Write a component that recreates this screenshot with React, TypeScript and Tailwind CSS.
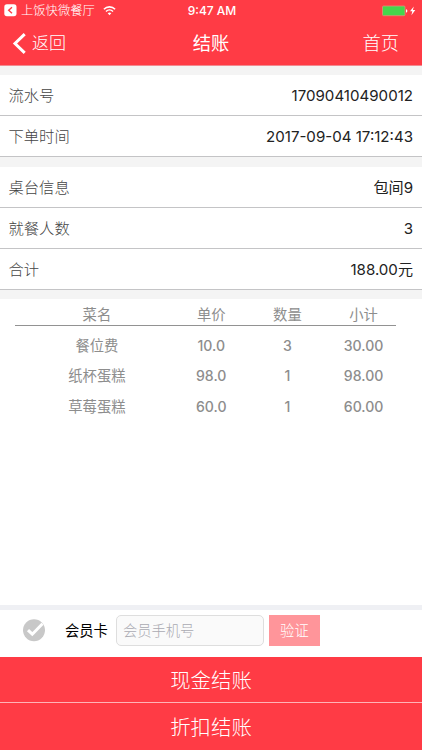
import React, { useState } from 'react';

interface InfoRowProps {
  label: string;
  value: string;
}

interface Dish {
  name: string;
  price: string;
  count: number;
  total: string;
}

const dishes: Dish[] = [
  { name: '餐位费', price: '10.0', count: 3, total: '30.00' },
  { name: '纸杯蛋糕', price: '98.0', count: 1, total: '98.00' },
  { name: '草莓蛋糕', price: '60.0', count: 1, total: '60.00' }
];

function StatusBar() {
  return (
    <div className="grid h-[21px] grid-cols-3 items-center pl-1 pr-[5px] text-[12px]">
      <div className="flex items-center">
        <svg width="13" height="13" viewBox="0 0 13 13">
          <rect x="0.3" y="0.3" width="12.2" height="11.9" rx="2.6" fill="#fff" />
          <path d="M8 3.2 4.7 6.2 8 9.2" fill="none" stroke="#ff3b45" strokeWidth="1.4" />
        </svg>
        <span className="ml-1 whitespace-nowrap pt-[2px] text-[12.3px] font-light">上饭快微餐厅</span>
        <svg className="ml-2 shrink-0" width="13" height="10" viewBox="0 0 13 10">
          <path d="M0.9 3.2a8 8 0 0 1 11.2 0" fill="none" stroke="#fff" strokeWidth="1.6" />
          <path d="M3 5.5a5 5 0 0 1 7 0" fill="none" stroke="#fff" strokeWidth="1.5" />
          <path d="M4.7 7.3a2.6 2.6 0 0 1 3.6 0L6.5 9.2z" fill="#fff" />
        </svg>
      </div>
      <span className="pl-[3px] pt-px text-center font-medium">9:47 AM</span>
      <div className="flex items-center justify-end">
        <svg width="35" height="12" viewBox="0 0 35 12">
          <rect x="0.5" y="1" width="22.5" height="9.7" rx="1" fill="#45d64c" stroke="#dc9278" strokeWidth="0.8" />
          <path d="M24 4.2c1.8 0 1.8 3.4 0 3.4z" fill="#fff" />
          <path d="M31.8 1.4 28 6.3h2.3l-0.9 4L33.3 5h-2.4z" fill="#fff" />
        </svg>
      </div>
    </div>
  );
}

function InfoRow({ label, value }: InfoRowProps) {
  return (
    <div className="flex h-[41px] items-center justify-between border-b border-[#c4c4c6] bg-white pl-[8.5px] pr-[9px] pt-[2px]">
      <span className="text-[15.3px] font-light text-[#444]">{label}</span>
      <span className="text-[15.1px] text-[#222]">{value}</span>
    </div>
  );
}

export default function App() {
  const [phone, setPhone] = useState('');

  return (
    <div className="flex h-[750px] w-[422px] flex-col overflow-hidden bg-white font-['Inter','Noto_Sans_CJK_SC',sans-serif]">
      <header className="h-[66px] shrink-0 border-b border-[#f28a90] bg-[#ff3b45] text-white">
        <StatusBar />
        <div className="grid h-[44px] grid-cols-3 items-center pl-3 pr-[23px]">
          <button className="flex items-center gap-[6px] text-[17px] font-light">
            <svg width="14" height="21" viewBox="0 0 14 21">
              <path d="M12.7 1.2 3 10.5l9.7 9.3" fill="none" stroke="#fff" strokeWidth="3" />
            </svg>
            <span className="pt-[2px]">返回</span>
          </button>
          <h1 className="pl-[11px] pt-px text-center text-[18.3px] font-normal">结账</h1>
          <button className="pt-px text-right text-[18.3px] font-light">首页</button>
        </div>
      </header>

      <section className="shrink-0 border-t-[9px] border-[#f4f4f4]">
        <InfoRow label="流水号" value="17090410490012" />
        <InfoRow label="下单时间" value="2017-09-04 17:12:43" />
      </section>
      <section className="shrink-0 border-t-[10px] border-[#f4f4f4]">
        <InfoRow label="桌台信息" value="包间9" />
        <InfoRow label="就餐人数" value="3" />
        <InfoRow label="合计" value="188.00元" />
      </section>

      <main className="flex-1 border-t-[9px] border-[#f4f4f4] pl-[15px] pr-[26px] text-[14.3px] text-[#8d8d8d]">
        <div className="grid h-[27px] grid-cols-[43%_17%_23%_17%] items-center border-b border-[#929292] pt-[5px] text-center">
          <span>菜名</span>
          <span>单价</span>
          <span>数量</span>
          <span>小计</span>
        </div>
        <div className="pt-1">
          {dishes.map((dish) => (
            <div
              key={dish.name}
              className="grid h-[30.6px] grid-cols-[43%_17%_23%_17%] items-center text-center text-[14.1px] font-medium"
            >
              <span className="text-[14.3px] font-normal">{dish.name}</span>
              <span>{dish.price}</span>
              <span>{dish.count}</span>
              <span>{dish.total}</span>
            </div>
          ))}
        </div>
      </main>

      <footer className="shrink-0">
        <div className="flex h-[52px] items-center border-t-[5px] border-[#eff0f4] pl-[23px] pb-[6px] text-[14.3px]">
          <svg className="shrink-0" width="23" height="24" viewBox="0 0 23 24">
            <circle cx="11" cy="11.3" r="11" fill="#c8c8c8" />
            <path d="m5 11.1 4.3 4.1L19.5 4.7" fill="none" stroke="#fff" strokeWidth="3" />
          </svg>
          <span className="ml-[19px] text-black">会员卡</span>
          <input
            className="ml-2 h-[31px] w-[148px] rounded-[5px] border border-[#dedede] bg-[#fafafa] px-[6px] font-light outline-none placeholder:text-[#aaaab2]"
            placeholder="会员手机号"
            value={phone}
            onChange={(e) => setPhone(e.target.value)}
          />
          <button className="ml-[5px] h-[31px] w-[51px] bg-[#ff959a] pt-px font-light text-white">验证</button>
        </div>
        <button className="block h-[46px] w-full border-b border-[#ffb3b7] bg-[#ff3b45] pt-1 text-[20.4px] font-light text-white">
          现金结账
        </button>
        <button className="block h-[47px] w-full bg-[#ff3b45] pt-[3px] text-[20.4px] font-light text-white">
          折扣结账
        </button>
      </footer>
    </div>
  );
}
